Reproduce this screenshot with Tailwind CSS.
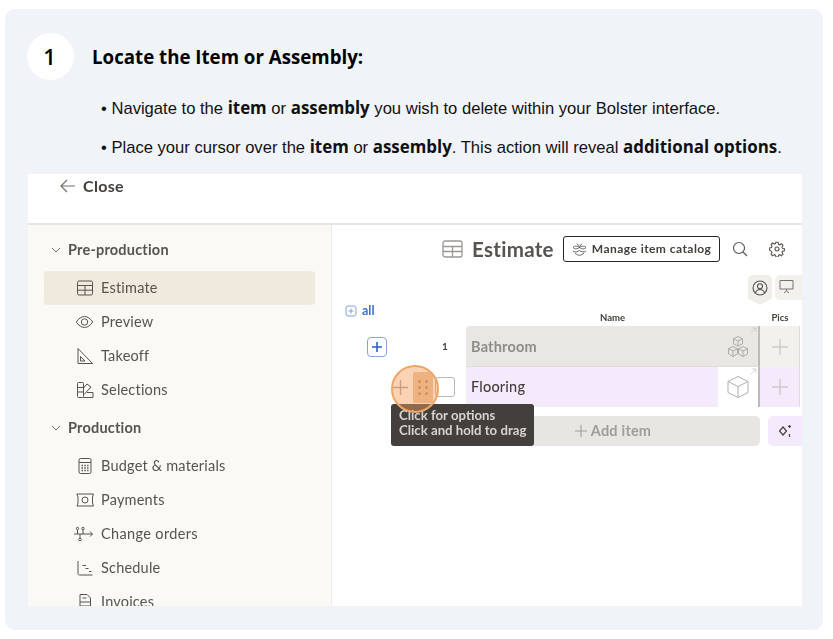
<!DOCTYPE html>
<html lang="en">
  <head>
    <meta charset="UTF-8" />
    <meta name="viewport" content="width=device-width, initial-scale=1.0" />
    <title>Locate the Item or Assembly</title>
    <script src="https://cdn.jsdelivr.net/npm/@tailwindcss/browser@4"></script>
  </head>
  <body class="bg-white font-['Liberation_Sans',sans-serif]">
    <div class="pt-[9px] pl-[5px]">
      <div class="w-[818px] h-[621px] bg-[#f0f4f9] rounded-[10px] flex flex-col">
        <!-- step heading -->
        <div class="flex items-center pt-[24px] pl-[22px] h-[71px]">
          <div class="w-[47px] h-[47px] pr-[2px] rounded-full bg-white flex items-center justify-center font-['Open_Sans',sans-serif] font-semibold text-[22px] text-black">1</div>
          <h2 class="ml-[18px] pt-[1px] font-['Open_Sans',sans-serif] font-bold text-[18.7px] text-black">Locate the Item or Assembly:</h2>
        </div>

        <!-- bullets -->
        <div class="mt-[16px] pl-[96px] flex flex-col gap-[15px] text-[16.6px] text-[#111] whitespace-nowrap">
          <p class="h-[24px] leading-[24px]">• Navigate to the <b class="font-['Open_Sans',sans-serif] font-bold text-[16.9px]">item</b> or <b class="font-['Open_Sans',sans-serif] font-bold text-[16.9px]">assembly</b> you wish to delete within your Bolster interface.</p>
          <p class="h-[24px] leading-[24px]">• Place your cursor over the <b class="font-['Open_Sans',sans-serif] font-bold text-[16.9px]">item</b> or <b class="font-['Open_Sans',sans-serif] font-bold text-[16.9px]">assembly</b>. This action will reveal <b class="font-['Open_Sans',sans-serif] font-bold text-[16.9px]">additional options</b>.</p>
        </div>

        <!-- app screenshot -->
        <div class="mt-[15px] ml-[23px] w-[774px] h-[432px] bg-white overflow-hidden flex flex-col font-['Lato',sans-serif] text-[#57534e] blur-[0.35px]">
          <div class="h-[51px] shrink-0 border-b-2 border-[#e7e5e1] flex items-start pl-[31px] pt-[2px] gap-[7px]">
            <svg class="w-[17px] h-[20px] text-[#78716c]" viewBox="0 0 17 20" fill="none" stroke="currentColor" stroke-width="1.2"><path d="M16 10H2M8 4l-6 6 6 6" /></svg>
            <span class="text-[16px] font-bold leading-[20px] text-[#44403c] tracking-[0.3px]">Close</span>
          </div>

          <div class="flex flex-1 min-h-0">
            <!-- sidebar -->
            <aside class="w-[304px] shrink-0 bg-[#faf9f6] border-r border-[#eeece8] pt-[13px] px-[16px] overflow-hidden text-[14.5px] tracking-[0.2px]">
              <div class="h-[24px] flex items-center gap-[6px] font-bold text-[#57534e] pl-[6px]">
                <svg class="w-[12px] h-[12px] text-[#78716c]" viewBox="0 0 12 12" fill="none" stroke="currentColor" stroke-width="1"><path d="M2 4l4 4 4-4" /></svg>
                Pre-production
              </div>
              <div class="mt-[9px]">
                <div class="h-[34px] bg-[#efe9de] rounded-[4px] flex items-center pl-[32px] gap-[7px]">
                  <svg class="w-[18px] h-[18px]" viewBox="0 0 18 18" fill="none" stroke="currentColor" stroke-width="1"><rect x="1.500" y="2" width="15" height="14" rx="1.500" /><path d="M1.500 6.500h15M1.500 11.200h15M9 6.500V16" /></svg>
                  Estimate
                </div>
                <div class="h-[34px] flex items-center pl-[32px] gap-[7px]">
                  <svg class="w-[19px] h-[18px] -ml-px" viewBox="0 0 18 18" fill="none" stroke="currentColor" stroke-width="1"><path d="M0.800 9C3 5.600 6 3.500 9 3.500s6 2.100 8.200 5.500C15 12.400 12 14.500 9 14.500S3 12.400 0.800 9z" /><circle cx="9" cy="9" r="3.200" /></svg>
                  Preview
                </div>
                <div class="h-[34px] flex items-center pl-[32px] gap-[7px]">
                  <svg class="w-[18px] h-[18px]" viewBox="0 0 18 18" fill="none" stroke="currentColor" stroke-width="1"><path d="M2 1.500V16.500h14.500zM4.500 9.500v4.500h4.500z" /></svg>
                  Takeoff
                </div>
                <div class="h-[34px] flex items-center pl-[32px] gap-[7px]">
                  <svg class="w-[18px] h-[18px]" viewBox="0 0 18 18" fill="none" stroke="currentColor" stroke-width="1"><rect x="1.500" y="1.500" width="6" height="15" rx="1" /><path d="M1.500 6.500h6M1.500 11h6M7.500 7l3.500-4 4 3-7 7.500M7.500 16.500H17v-5h-6" /></svg>
                  Selections
                </div>
              </div>

              <div class="mt-[9px] h-[24px] flex items-center gap-[6px] font-bold text-[#57534e] pl-[6px]">
                <svg class="w-[12px] h-[12px] text-[#78716c]" viewBox="0 0 12 12" fill="none" stroke="currentColor" stroke-width="1"><path d="M2 4l4 4 4-4" /></svg>
                Production
              </div>
              <div class="mt-[9px]">
                <div class="h-[34px] flex items-center pl-[32px] gap-[7px]">
                  <svg class="w-[18px] h-[18px]" viewBox="0 0 18 18" fill="none" stroke="currentColor" stroke-width="1"><rect x="3" y="1.500" width="12" height="15" rx="1.500" /><path d="M3 5.500h12" /><path d="M5.500 8.500h7M5.500 11h7M5.500 13.500h7" stroke-dasharray="1.500 1.300" stroke-width="1.300" /></svg>
                  Budget &amp; materials
                </div>
                <div class="h-[34px] flex items-center pl-[32px] gap-[7px]">
                  <svg class="w-[18px] h-[18px]" viewBox="0 0 18 18" fill="none" stroke="currentColor" stroke-width="1"><path d="M2 3h15.500l-1 3v6l1 3H1l1-3V6L0.800 3z" /><circle cx="9" cy="9" r="3" /></svg>
                  Payments
                </div>
                <div class="h-[34px] flex items-center pl-[32px] gap-[7px]">
                  <svg class="w-[21px] h-[18px] -ml-[3px]" viewBox="0 0 20 18" fill="none" stroke="currentColor" stroke-width="1"><path d="M0.500 9H19M16.500 6.500L19 9l-2.500 2.500M6.500 9v4" /><circle cx="4" cy="3.500" r="1.200" /><circle cx="9.500" cy="3.500" r="1.200" /><circle cx="6.500" cy="14.500" r="1.300" /><path d="M4 4.700V9M9.500 4.700V9" /></svg>
                  <span class="tracking-[0.35px]">Change orders</span>
                </div>
                <div class="h-[34px] flex items-center pl-[32px] gap-[7px]">
                  <svg class="w-[18px] h-[18px]" viewBox="0 0 18 18" fill="none" stroke="currentColor" stroke-width="1"><path d="M2 2v12.500a1.500 1.500 0 0 0 1.500 1.500h13M6.500 6.500h3.500M9.500 9.500h3M13 12.500h2.500" /></svg>
                  Schedule
                </div>
                <div class="h-[34px] flex items-center pl-[32px] gap-[7px]">
                  <svg class="w-[18px] h-[18px]" viewBox="0 0 18 18" fill="none" stroke="currentColor" stroke-width="1"><path d="M4 1.500h7l3.500 3.500v11.500H4zM4 9h10.500M4 13h10.500M6.500 5h4" /></svg>
                  Invoices
                </div>
              </div>
            </aside>

            <!-- estimate panel -->
            <main class="relative flex-1 min-w-0 overflow-hidden bg-white pt-[11px]">
              <div class="flex items-center h-[26px] pl-[110px]">
                <svg class="w-[21px] h-[20px] text-[#9a9794]" viewBox="0 0 21 20" fill="none" stroke="currentColor" stroke-width="1.300"><rect x="1" y="2" width="19" height="16" rx="2" /><path d="M1 7.500h19M1 12.500h19M10.500 7.500V18" /></svg>
                <span class="ml-[9px] text-[20.500px] font-bold text-[#57534e] tracking-[0.3px]">Estimate</span>
                <div class="ml-[9px] w-[157px] h-[26px] border border-[#292524] rounded-[3px] flex items-center pl-[8px] gap-[5px] text-[12px] font-bold text-[#44403c] tracking-[0.45px] whitespace-nowrap">
                  <svg class="w-[15px] h-[15px]" viewBox="0 0 15 15" fill="none" stroke="currentColor" stroke-width="0.800"><path d="M1 5.500c2-2 4.500-1.500 6.500 0 2-1.500 4.500-2 6.500 0-2 2-4.500 1.500-6.500 0-2 1.500-4.500 2-6.500 0zM1 9c2 1.500 4.500 1 6.500-.5C9.500 10 12 10.500 14 9M3 11c3 3 6 3 9 0M5 1.500l2.500 3 2.500-3" /></svg>
                  Manage item catalog
                </div>
                <svg class="ml-[12px] w-[16px] h-[16px] text-[#57534e]" viewBox="0 0 16 16" fill="none" stroke="currentColor" stroke-width="1.100"><circle cx="7" cy="7" r="5.500" /><path d="M11 11l4 4" /></svg>
                <svg class="ml-[21px] w-[16px] h-[16px] text-[#57534e]" viewBox="0 0 24 24" fill="none" stroke="currentColor" stroke-width="1.600"><circle cx="12" cy="12" r="3" /><path d="M10.300 2h3.400l.6 2.900 1.800.8 2.500-1.600 2.400 2.400-1.600 2.500.8 1.800 2.900.6v3.400l-2.900.6-.8 1.800 1.600 2.500-2.400 2.400-2.500-1.600-1.800.8-.6 2.900h-3.400l-.6-2.900-1.800-.8-2.500 1.600-2.400-2.400 1.600-2.500-.8-1.800L.9 13.700v-3.400l2.900-.6.8-1.800L3 5.400 5.400 3l2.500 1.600 1.800-.8z" /></svg>
              </div>

              <!-- view tabs -->
              <div class="mt-[13px] h-[28px] flex justify-end gap-[3px]">
                <div class="w-[24px] h-[30px] bg-[#f0eee9] rounded-t-[5px] flex items-start justify-center pt-[5px] [clip-path:polygon(0_0,100%_0,100%_78%,50%_100%,0_78%)]">
                  <svg class="w-[16px] h-[16px] text-[#57534e]" viewBox="0 0 16 16" fill="none" stroke="currentColor" stroke-width="1.100"><circle cx="8" cy="8" r="7" /><circle cx="8" cy="6.300" r="2.500" /><path d="M3.300 13c1-2.500 2.600-3.500 4.700-3.500s3.700 1 4.700 3.500" /></svg>
                </div>
                <div class="w-[27px] h-[25px] bg-[#f3f1ee] rounded-l-[5px] flex items-start justify-center pt-[4px] pr-[5px]">
                  <svg class="w-[15px] h-[15px] text-[#78716c]" viewBox="0 0 15 15" fill="none" stroke="currentColor" stroke-width="1"><path d="M1 1.500h13v8.500H1zM7.500 10v2M5 14l2.500-2 2.500 2" /></svg>
                </div>
              </div>

              <!-- column heads -->
              <div class="flex h-[23px]">
                <div class="w-[134px] pl-[13px] pt-[1px] flex items-start gap-[5px] text-[#3b6fd8] text-[12.500px] font-bold leading-[14px]">
                  <svg class="w-[12px] h-[12px] mt-px" viewBox="0 0 12 12" fill="none" stroke="#7fa3e6" stroke-width="1"><rect x="1" y="1" width="10" height="10" rx="2" /><path d="M6 3.500v5M3.500 6h5" /></svg>
                  all
                </div>
                <div class="w-[294px] text-center pt-[8px] pr-[1px] text-[9.500px] font-bold leading-[14px] text-[#44403c]">Name</div>
                <div class="w-[40px] text-center pt-[8px] text-[9.500px] font-bold leading-[14px] text-[#44403c]">Pics</div>
              </div>

              <!-- rows -->
              <div class="flex h-[41px]">
                <div class="w-[134px] flex items-center">
                  <div class="ml-[35px] w-[20px] h-[20px] rounded-[4px] border-[1.500px] border-[#85a6e3] flex items-center justify-center">
                    <svg class="w-[12px] h-[12px]" viewBox="0 0 12 12" fill="none" stroke="#2f5fc4" stroke-width="1.600"><path d="M6 1v10M1 6h10" /></svg>
                  </div>
                  <span class="ml-[55px] text-[10px] font-bold text-[#44403c]">1</span>
                </div>
                <div class="relative w-[294px] bg-[#e9e7e4] rounded-tl-[4px] border-r-2 border-[#bdbbb7] border-b border-b-[#dfdcd8] flex items-center pl-[5px] pt-[1px] text-[14.500px] font-bold tracking-[0.2px] text-[#8f8b87]">
                  Bathroom
                  <svg class="absolute right-[8px] top-[9px] w-[24px] h-[23px] text-[#a8a5a1]" viewBox="0 0 24 23" fill="none" stroke="currentColor" stroke-width="0.900"><path d="M12 1.500l4.500 2.300v5L12 11 7.500 8.800v-5zM7.500 3.800L12 6l4.500-2.200M12 6v5M7 11.500l4.500 2.300v5L7 21.500l-4.500-2.700v-5zM2.500 13.800L7 16l4.500-2.200M7 16v5.500M17 11.500l4.500 2.300v5L17 21.500l-4.500-2.700v-5zM12.500 13.800L17 16l4.500-2.200M17 16v5.500" /></svg>
                  <svg class="absolute right-[1px] top-[1px] w-[7px] h-[7px] text-[#c9c6c2]" viewBox="0 0 7 7" fill="none" stroke="currentColor" stroke-width="0.700"><path d="M1 6l5-5M2 1h4v4" /></svg>
                </div>
                <div class="w-[40px] bg-[#f3f1ee] border-r border-[#e0ddd9] flex items-center justify-center">
                  <svg class="w-[16px] h-[16px] text-[#bdbab6]" viewBox="0 0 16 16" fill="none" stroke="currentColor" stroke-width="1"><path d="M8 0v16M0 8h16" /></svg>
                </div>
              </div>
              <div class="flex h-[40px]">
                <div class="w-[134px] flex items-center">
                  <svg class="ml-[61px] w-[15px] h-[15px] text-[#a39f9b]" viewBox="0 0 15 15" fill="none" stroke="currentColor" stroke-width="1.300"><path d="M7.500 0v15M0 7.500h15" /></svg>
                  <div class="ml-[5px] w-[20px] h-[31px] rounded-[2px] bg-[#e9c39f] grid grid-cols-2 gap-x-[3px] gap-y-[3px] content-center justify-center justify-items-center px-[5px]">
                    <i class="w-[3px] h-[3px] rounded-full bg-[#a98a6d]"></i><i class="w-[3px] h-[3px] rounded-full bg-[#a98a6d]"></i>
                    <i class="w-[3px] h-[3px] rounded-full bg-[#a98a6d]"></i><i class="w-[3px] h-[3px] rounded-full bg-[#a98a6d]"></i>
                    <i class="w-[3px] h-[3px] rounded-full bg-[#a98a6d]"></i><i class="w-[3px] h-[3px] rounded-full bg-[#a98a6d]"></i>
                  </div>
                  <div class="ml-[2px] w-[20px] h-[20px] rounded-[3px] border border-[#b9b6b2] bg-white"></div>
                </div>
                <div class="relative w-[294px] bg-[#f5eafc] border-r-2 border-[#bdbbb7] flex items-center pl-[5px] text-[14.500px] font-medium tracking-[0.2px] text-[#44403c]">
                  Flooring
                  <div class="absolute right-0 top-0 w-[40px] h-full bg-white flex items-center justify-center">
                    <svg class="w-[24px] h-[24px] text-[#a8a5a1]" viewBox="0 0 24 24" fill="none" stroke="currentColor" stroke-width="0.900"><path d="M12 1.500l10 5v11l-10 5-10-5v-11zM2 6.500l10 5 10-5M12 11.500v11" /></svg>
                    <svg class="absolute right-[1px] top-[1px] w-[7px] h-[7px] text-[#c9c6c2]" viewBox="0 0 7 7" fill="none" stroke="currentColor" stroke-width="0.700"><path d="M1 6l5-5M2 1h4v4" /></svg>
                  </div>
                </div>
                <div class="w-[40px] bg-[#f5eafc] border-r border-[#e0ddd9] flex items-center justify-center">
                  <svg class="w-[16px] h-[16px] text-[#bdbab6]" viewBox="0 0 16 16" fill="none" stroke="currentColor" stroke-width="1"><path d="M8 0v16M0 8h16" /></svg>
                </div>
              </div>

              <!-- add item -->
              <div class="mt-[9px] flex h-[30px]">
                <div class="ml-[136px] w-[292px] bg-[#e8e6e3] rounded-[5px] flex items-center justify-center gap-[4px] pr-[2px] text-[14.500px] font-bold tracking-[0.2px] text-[#a09d99]">
                  <svg class="w-[12px] h-[12px]" viewBox="0 0 12 12" fill="none" stroke="currentColor" stroke-width="1.100"><path d="M6 0v12M0 6h12" /></svg>
                  Add item
                </div>
                <div class="ml-[8px] flex-1 bg-[#f5eafc] rounded-l-[5px] flex items-center justify-center">
                  <svg class="w-[16px] h-[16px] text-[#44403c]" viewBox="0 0 16 16" fill="none" stroke="currentColor" stroke-width="1.200"><path d="M6 4L9.500 8 6 12 2.500 8z" /><path d="M12.500 2v3M11 3.500h3M12.500 11v3" /></svg>
                </div>
              </div>

              <!-- tooltip and click highlight -->
              <div class="absolute left-[59px] top-[179px] w-[143px] h-[42px] bg-[#423f3d] rounded-[3px] pt-[4px] pl-[8px] text-[13.200px] leading-[15px] font-bold text-[#d6d3d0] whitespace-nowrap">
                <div>Click for options</div>
                <div>Click and hold to drag</div>
              </div>
              <div class="absolute left-[59px] top-[140px] w-[48px] h-[48px] rounded-full bg-[#f59e5b]/45 border-2 border-[#f0a566]"></div>
            </main>
          </div>
        </div>
      </div>
    </div>
  </body>
</html>
